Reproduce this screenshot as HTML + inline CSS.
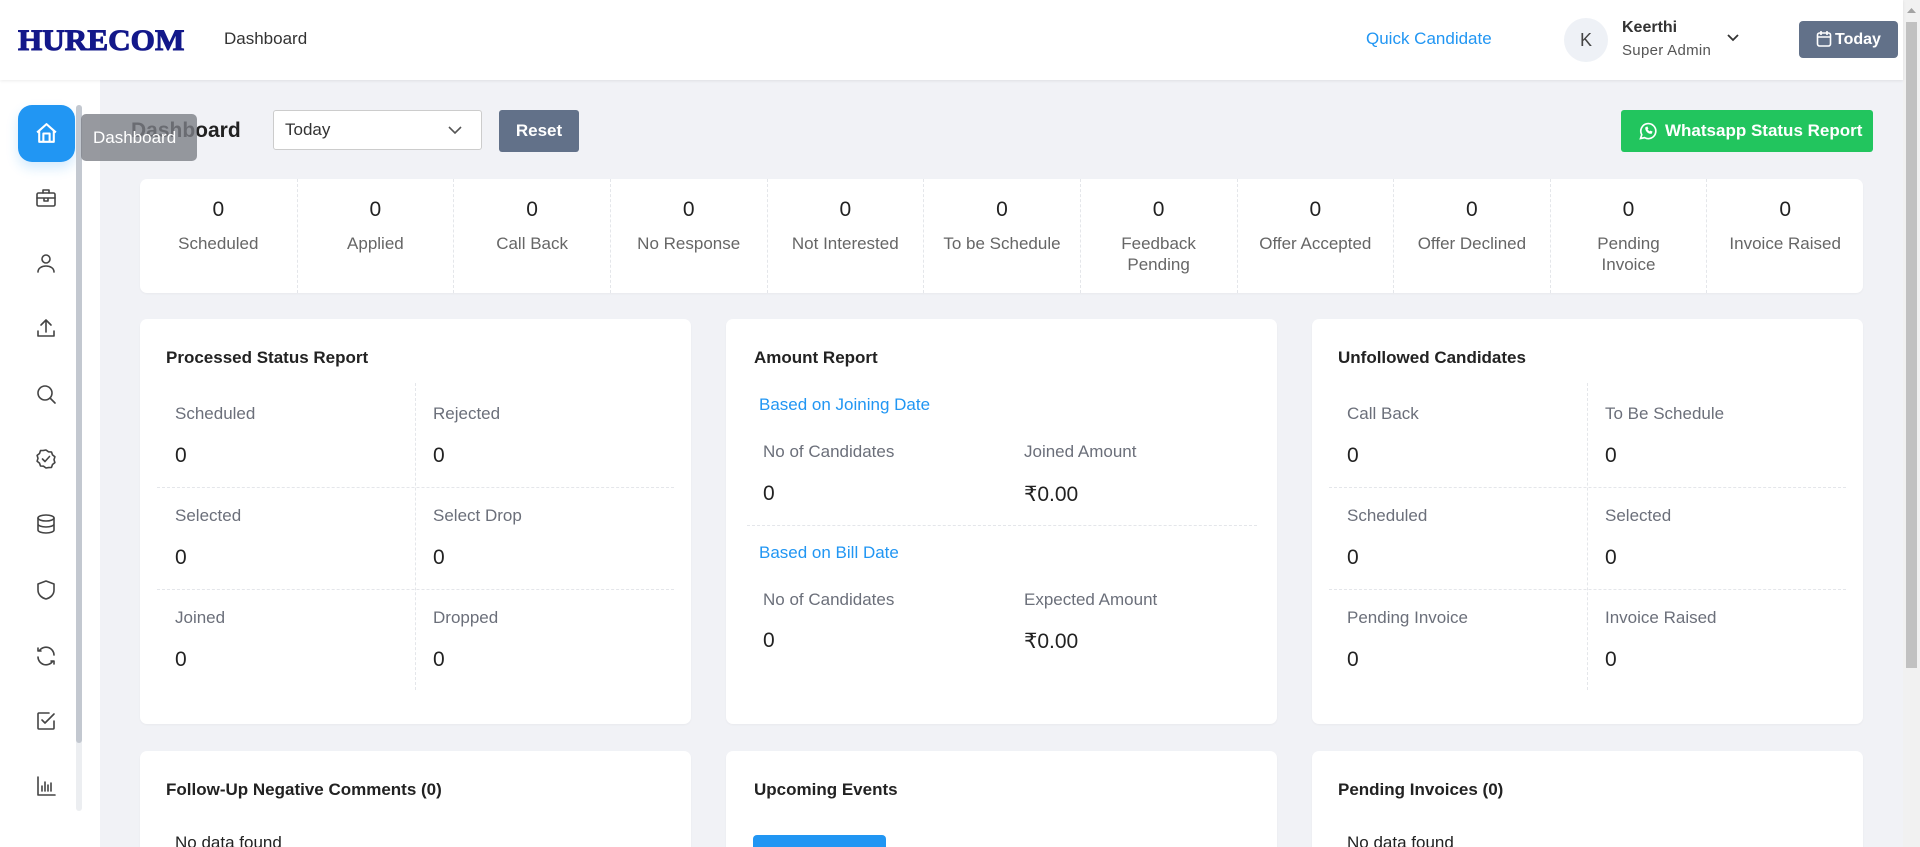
<!DOCTYPE html>
<html style="overflow:hidden;height:847px"><head><meta charset="utf-8">
<style>
*{box-sizing:border-box;margin:0;padding:0}
body{width:1920px;height:847px;overflow:hidden;background:#f1f2f6;font-family:"Liberation Sans",sans-serif;position:relative;color:#222}
.a{position:absolute}
.hdr{left:0;top:0;width:1903px;height:80px;background:#fff;box-shadow:0 1px 3px rgba(0,0,0,.08);z-index:3}
.side{left:0;top:80px;width:100px;height:767px;background:#fff}
.ic{position:absolute;left:34px;width:24px;height:24px}
.ic svg{width:24px;height:24px;fill:none;stroke:#444;stroke-width:1.6;stroke-linecap:round;stroke-linejoin:round}
.card{background:#fff;border-radius:7px;box-shadow:0 1px 2px rgba(0,0,0,.04)}
.col{position:absolute;top:0;height:114px;width:156.6px;text-align:center;border-left:1px dashed #e4e6ea}
.col:first-child{border-left:none}
.col .n{position:absolute;top:19px;width:100%;font-size:21px;color:#222}
.col .l{position:absolute;top:54px;width:100%;font-size:17px;color:#666;line-height:21px;padding:0 6px}
.t{font-size:17px;font-weight:bold;color:#222}
.lb{font-size:17px;color:#6b6f7a}
.v{font-size:21px;color:#222}
.lk{font-size:17px;color:#2196f3}
.dh{border-top:1px dashed #e4e6ea;height:0}
.dv{border-left:1px dashed #e4e6ea;width:0}
</style></head><body>
<div class="a" style="left:0;top:0;width:1920px;height:847px;overflow:hidden">

<div class="a hdr">
  <div class="a" style="left:18px;top:24px;font-family:'Liberation Serif',serif;font-weight:bold;font-size:30px;color:#13188a;-webkit-text-stroke:1px #13188a;transform:scaleX(1.04);transform-origin:left">HURECOM</div>
  <div class="a" style="left:224px;top:29px;font-size:17px;color:#333">Dashboard</div>
  <div class="a" style="left:1366px;top:29px;font-size:17px;color:#2196f3">Quick Candidate</div>
  <div class="a" style="left:1564px;top:18px;width:44px;height:44px;border-radius:50%;background:#eef1f6;text-align:center;line-height:44px;font-size:18px;color:#444">K</div>
  <div class="a" style="left:1622px;top:19px;font-size:16px;font-weight:bold;color:#333">Keerthi</div>
  <div class="a" style="left:1622px;top:42px;font-size:15px;color:#555;letter-spacing:.3px">Super Admin</div>
  <svg class="a" style="left:1725px;top:32px" width="16" height="12" viewBox="0 0 16 12"><path d="M3 3l5 5 5-5" fill="none" stroke="#333" stroke-width="1.8"/></svg>
  <div class="a" style="left:1799px;top:21px;width:99px;height:37px;background:#627189;border-radius:4px;color:#fff;font-weight:bold;font-size:16px;line-height:37px;padding-left:19px">
    <svg style="position:absolute;left:17px;top:9px" width="16" height="18" viewBox="0 0 16 18"><rect x="1.5" y="3" width="13" height="13" rx="2" fill="none" stroke="#fff" stroke-width="1.6"/><path d="M1.5 7h13M5 1v4M11 1v4" stroke="#fff" stroke-width="1.6"/></svg>
    <span style="margin-left:17px">Today</span></div>
</div>

<div class="a" style="left:1903px;top:0;width:17px;height:847px;background:#f1f1f1"></div>
<div class="a" style="left:1906px;top:22px;width:11px;height:646px;background:#c1c1c1"></div>
<svg class="a" style="left:1906px;top:6px" width="11" height="8"><path d="M1 7l4.5-5 4.5 5z" fill="#a3a3a3"/></svg>

<div class="a side">
  <div class="a" style="left:18px;top:25px;width:57px;height:57px;border-radius:14px;background:#2196f3;box-shadow:0 6px 12px rgba(33,150,243,.2)">
    <svg style="position:absolute;left:16px;top:16px" width="25" height="25" viewBox="0 0 24 24" fill="none" stroke="#fff" stroke-width="2" stroke-linejoin="round"><path d="M3 11L12 3l9 8M5 9v11h14V9M9 20v-8h6v8"/></svg>
  </div>
  <div class="a" style="left:76px;top:25px;width:6px;height:706px;background:#eceef1;border-radius:3px"></div>
  <div class="a" style="left:76px;top:25px;width:6px;height:638px;background:#c3c8d0;border-radius:3px"></div>
  <div class="ic" style="top:106px"><svg viewBox="0 0 24 24"><rect x="3" y="7" width="18" height="13" rx="1.5"/><path d="M9 7V4h6v3M3 12h18M10 12v3h4v-3"/></svg></div>
  <div class="ic" style="top:171px"><svg viewBox="0 0 24 24"><circle cx="12" cy="8" r="4"/><path d="M4 21c0-4 4-6 8-6s8 2 8 6"/></svg></div>
  <div class="ic" style="top:236px"><svg viewBox="0 0 24 24"><path d="M4 15v5h16v-5M12 16V4M7 9l5-5 5 5"/></svg></div>
  <div class="ic" style="top:302px"><svg viewBox="0 0 24 24"><circle cx="11" cy="11" r="7"/><path d="M16 16l5 5"/></svg></div>
  <div class="ic" style="top:367px"><svg viewBox="0 0 24 24"><path d="M12 3l2.5 1.8 3 .2 1 2.9 2.4 1.9-.9 2.9.9 2.9-2.4 1.9-1 2.9-3 .2L12 21l-2.5-1.8-3-.2-1-2.9-2.4-1.9.9-2.9-.9-2.9 2.4-1.9 1-2.9 3-.2z"/><path d="M8.5 12l2.5 2.5 4.5-5"/></svg></div>
  <div class="ic" style="top:432px"><svg viewBox="0 0 24 24"><ellipse cx="12" cy="6" rx="8" ry="3"/><path d="M4 6v12c0 1.7 3.6 3 8 3s8-1.3 8-3V6M4 12c0 1.7 3.6 3 8 3s8-1.3 8-3"/></svg></div>
  <div class="ic" style="top:498px"><svg viewBox="0 0 24 24"><path d="M12 3l8 3v6c0 5-4 8-8 9-4-1-8-4-8-9V6z"/></svg></div>
  <div class="ic" style="top:564px"><svg viewBox="0 0 24 24"><path d="M20 11a8 8 0 0 0-14.5-4.5M4 4v3h3M4 13a8 8 0 0 0 14.5 4.5M20 20v-3h-3"/></svg></div>
  <div class="ic" style="top:629px"><svg viewBox="0 0 24 24"><path d="M20 12v7a1 1 0 0 1-1 1H5a1 1 0 0 1-1-1V5a1 1 0 0 1 1-1h10"/><path d="M8 11l3 3 9-9"/></svg></div>
  <div class="ic" style="top:694px"><svg viewBox="0 0 24 24"><path d="M4 3v18h17M8 17v-5M11 17V8M14 17v-6M17 17V9"/></svg></div>
</div>

<div class="a" style="left:81px;top:114px;width:116px;height:47px;background:rgba(125,128,135,.8);border-radius:5px;color:#fff;font-size:17px;line-height:47px;padding-left:12px;z-index:5">Dashboard</div>

<div class="a" style="left:131px;top:119px;font-size:21px;font-weight:bold;color:#222">Dashboard</div>
<div class="a" style="left:273px;top:110px;width:209px;height:40px;background:#fff;border:1px solid #ccc;border-radius:3px;font-size:17px;line-height:38px;padding-left:11px;color:#333">Today
  <svg style="position:absolute;right:18px;top:14px" width="16" height="10" viewBox="0 0 16 10"><path d="M2 2l6 6 6-6" fill="none" stroke="#555" stroke-width="1.6"/></svg></div>
<div class="a" style="left:499px;top:110px;width:80px;height:42px;background:#627189;border-radius:3px;color:#fff;font-weight:bold;font-size:17px;line-height:42px;text-align:center">Reset</div>
<div class="a" style="left:1621px;top:110px;width:252px;height:42px;background:#22c55e;border-radius:3px;color:#fff;font-weight:bold;font-size:17px;line-height:42px;padding-left:44px">Whatsapp Status Report
  <svg style="position:absolute;left:17px;top:11px" width="20" height="20" viewBox="0 0 24 24" fill="none" stroke="#fff" stroke-width="2"><path d="M3 21l1.5-4.5A9 9 0 1 1 8 20z"/><path d="M9 8c0 4 3 7 7 7l1-2-2-1-1 1c-1-.5-2.5-2-3-3l1-1-1-2z" fill="#fff" stroke-width="0.8"/></svg></div>

<div class="a card" style="left:140px;top:179px;width:1723px;height:114px">
  <div class="col" style="left:0"><div class="n">0</div><div class="l">Scheduled</div></div>
  <div class="col" style="left:156.6px"><div class="n">0</div><div class="l">Applied</div></div>
  <div class="col" style="left:313.3px"><div class="n">0</div><div class="l">Call Back</div></div>
  <div class="col" style="left:469.9px"><div class="n">0</div><div class="l">No Response</div></div>
  <div class="col" style="left:626.5px"><div class="n">0</div><div class="l">Not Interested</div></div>
  <div class="col" style="left:783.2px"><div class="n">0</div><div class="l">To be Schedule</div></div>
  <div class="col" style="left:939.8px"><div class="n">0</div><div class="l">Feedback<br>Pending</div></div>
  <div class="col" style="left:1096.5px"><div class="n">0</div><div class="l">Offer Accepted</div></div>
  <div class="col" style="left:1253.1px"><div class="n">0</div><div class="l">Offer Declined</div></div>
  <div class="col" style="left:1409.7px"><div class="n">0</div><div class="l">Pending<br>Invoice</div></div>
  <div class="col" style="left:1566.4px"><div class="n">0</div><div class="l">Invoice Raised</div></div>
</div>

<div class="a card" style="left:140px;top:319px;width:551px;height:405px">
  <div class="a t" style="left:26px;top:29px">Processed Status Report</div>
  <div class="a dv" style="left:275px;top:64px;height:307px"></div>
  <div class="a dh" style="left:17px;top:168px;width:517px"></div>
  <div class="a dh" style="left:17px;top:270px;width:517px"></div>
  <div class="a lb" style="left:35px;top:85px">Scheduled</div><div class="a v" style="left:35px;top:125px">0</div>
  <div class="a lb" style="left:293px;top:85px">Rejected</div><div class="a v" style="left:293px;top:125px">0</div>
  <div class="a lb" style="left:35px;top:187px">Selected</div><div class="a v" style="left:35px;top:227px">0</div>
  <div class="a lb" style="left:293px;top:187px">Select Drop</div><div class="a v" style="left:293px;top:227px">0</div>
  <div class="a lb" style="left:35px;top:289px">Joined</div><div class="a v" style="left:35px;top:329px">0</div>
  <div class="a lb" style="left:293px;top:289px">Dropped</div><div class="a v" style="left:293px;top:329px">0</div>
</div>

<div class="a card" style="left:726px;top:319px;width:551px;height:405px">
  <div class="a t" style="left:28px;top:29px">Amount Report</div>
  <div class="a lk" style="left:33px;top:76px">Based on Joining Date</div>
  <div class="a lb" style="left:37px;top:123px">No of Candidates</div><div class="a v" style="left:37px;top:163px">0</div>
  <div class="a lb" style="left:298px;top:123px">Joined Amount</div><div class="a v" style="left:298px;top:163px">₹0.00</div>
  <div class="a dh" style="left:21px;top:206px;width:510px"></div>
  <div class="a lk" style="left:33px;top:224px">Based on Bill Date</div>
  <div class="a lb" style="left:37px;top:271px">No of Candidates</div><div class="a v" style="left:37px;top:310px">0</div>
  <div class="a lb" style="left:298px;top:271px">Expected Amount</div><div class="a v" style="left:298px;top:310px">₹0.00</div>
</div>

<div class="a card" style="left:1312px;top:319px;width:551px;height:405px">
  <div class="a t" style="left:26px;top:29px">Unfollowed Candidates</div>
  <div class="a dv" style="left:275px;top:64px;height:307px"></div>
  <div class="a dh" style="left:17px;top:168px;width:517px"></div>
  <div class="a dh" style="left:17px;top:270px;width:517px"></div>
  <div class="a lb" style="left:35px;top:85px">Call Back</div><div class="a v" style="left:35px;top:125px">0</div>
  <div class="a lb" style="left:293px;top:85px">To Be Schedule</div><div class="a v" style="left:293px;top:125px">0</div>
  <div class="a lb" style="left:35px;top:187px">Scheduled</div><div class="a v" style="left:35px;top:227px">0</div>
  <div class="a lb" style="left:293px;top:187px">Selected</div><div class="a v" style="left:293px;top:227px">0</div>
  <div class="a lb" style="left:35px;top:289px">Pending Invoice</div><div class="a v" style="left:35px;top:329px">0</div>
  <div class="a lb" style="left:293px;top:289px">Invoice Raised</div><div class="a v" style="left:293px;top:329px">0</div>
</div>

<div class="a card" style="left:140px;top:751px;width:551px;height:120px">
  <div class="a t" style="left:26px;top:29px">Follow-Up Negative Comments (0)</div>
  <div class="a" style="left:35px;top:82px;font-size:17px;color:#222">No data found</div>
</div>
<div class="a card" style="left:726px;top:751px;width:551px;height:120px">
  <div class="a t" style="left:28px;top:29px">Upcoming Events</div>
  <div class="a" style="left:27px;top:84px;width:133px;height:40px;background:#2196f3;border-radius:4px"></div>
</div>
<div class="a card" style="left:1312px;top:751px;width:551px;height:120px">
  <div class="a t" style="left:26px;top:29px">Pending Invoices (0)</div>
  <div class="a" style="left:35px;top:82px;font-size:17px;color:#222">No data found</div>
</div>

</div>
</body></html>
